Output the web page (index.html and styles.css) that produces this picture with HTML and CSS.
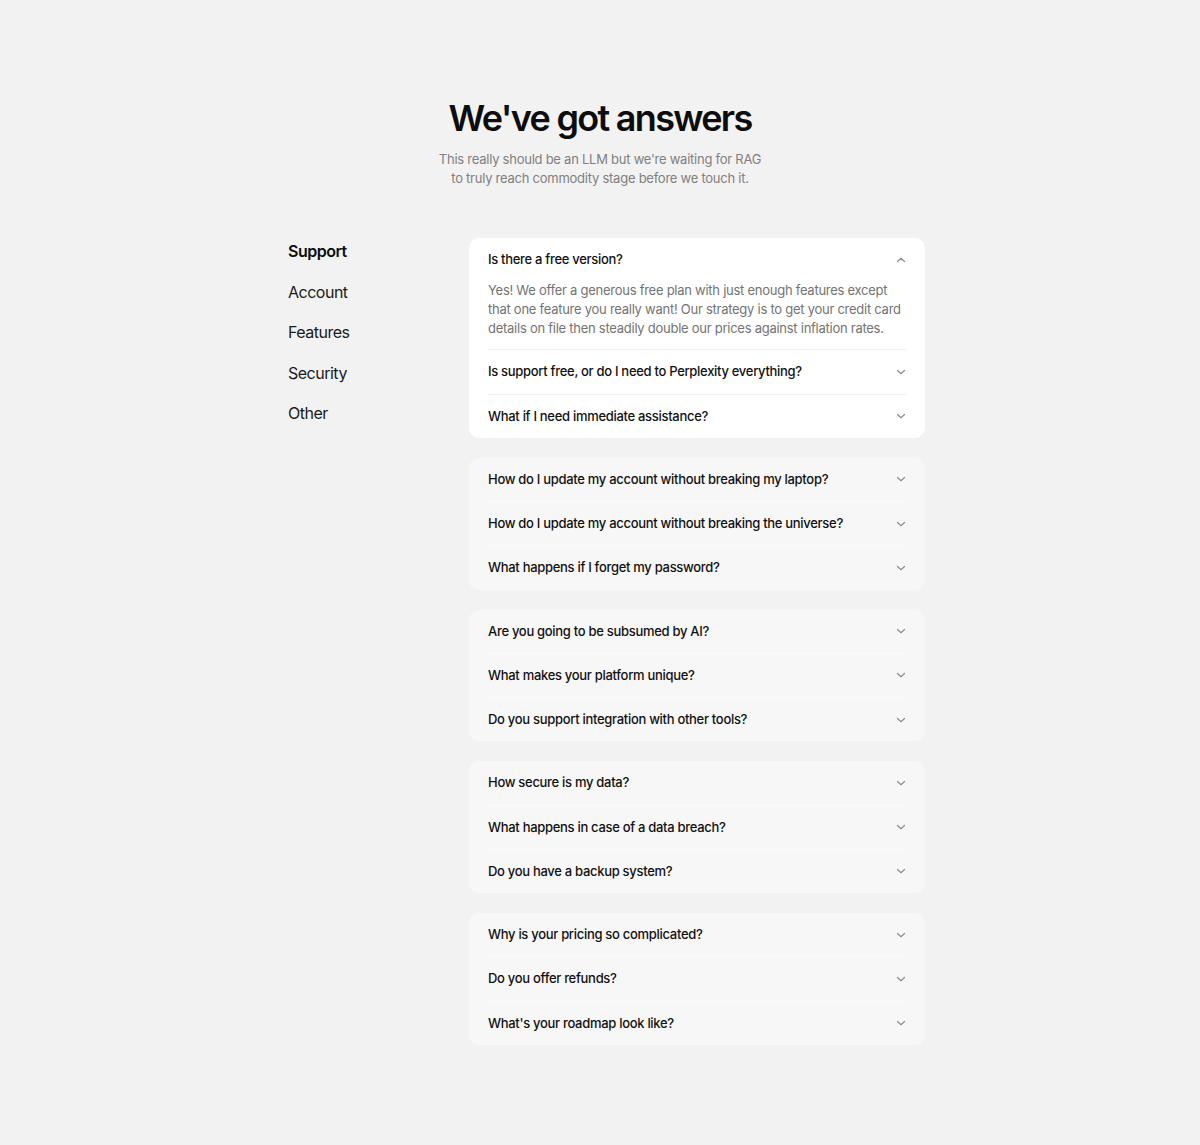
FILE: index.html
```html
<!DOCTYPE html>
<html lang="en">
<head>
    <meta charset="UTF-8">
    <meta name="viewport" content="width=device-width, initial-scale=1.0">
    <title>FAQ</title>
    <link rel="stylesheet" href="styles.css">
</head>
<body>
    <main id="faq">
        <header class="faq-header">
            <h1>We've got answers</h1>
            <p>This really should be an LLM but we're waiting for RAG<br>to truly reach commodity stage before we touch it.</p>
        </header>

        <div class="faq-layout">
            <nav class="faq-nav">
                <a class="active">Support</a>
                <a>Account</a>
                <a>Features</a>
                <a>Security</a>
                <a>Other</a>
            </nav>

            <div class="faq-groups">
                <section class="faq-card open">
                    <div class="faq-item">
                        <div class="faq-question">
                            <span>Is there a free version?</span>
                            <svg class="chevron" viewBox="0 0 10 10"><polyline points="1.5,6.5 5,3.3 8.5,6.5"/></svg>
                        </div>
                        <div class="faq-answer">Yes! We offer a generous free plan with just enough features except that one feature you really want! Our strategy is to get your credit card details on file then steadily double our prices against inflation rates.</div>
                    </div>
                    <div class="faq-item">
                        <div class="faq-question">
                            <span>Is support free, or do I need to Perplexity everything?</span>
                            <svg class="chevron" viewBox="0 0 10 10"><polyline points="1.5,3.5 5,6.7 8.5,3.5"/></svg>
                        </div>
                    </div>
                    <div class="faq-item">
                        <div class="faq-question">
                            <span>What if I need immediate assistance?</span>
                            <svg class="chevron" viewBox="0 0 10 10"><polyline points="1.5,3.5 5,6.7 8.5,3.5"/></svg>
                        </div>
                    </div>
                </section>

                <section class="faq-card">
                    <div class="faq-item">
                        <div class="faq-question">
                            <span>How do I update my account without breaking my laptop?</span>
                            <svg class="chevron" viewBox="0 0 10 10"><polyline points="1.5,3.5 5,6.7 8.5,3.5"/></svg>
                        </div>
                    </div>
                    <div class="faq-item">
                        <div class="faq-question">
                            <span>How do I update my account without breaking the universe?</span>
                            <svg class="chevron" viewBox="0 0 10 10"><polyline points="1.5,3.5 5,6.7 8.5,3.5"/></svg>
                        </div>
                    </div>
                    <div class="faq-item">
                        <div class="faq-question">
                            <span>What happens if I forget my password?</span>
                            <svg class="chevron" viewBox="0 0 10 10"><polyline points="1.5,3.5 5,6.7 8.5,3.5"/></svg>
                        </div>
                    </div>
                </section>

                <section class="faq-card">
                    <div class="faq-item">
                        <div class="faq-question">
                            <span>Are you going to be subsumed by AI?</span>
                            <svg class="chevron" viewBox="0 0 10 10"><polyline points="1.5,3.5 5,6.7 8.5,3.5"/></svg>
                        </div>
                    </div>
                    <div class="faq-item">
                        <div class="faq-question">
                            <span>What makes your platform unique?</span>
                            <svg class="chevron" viewBox="0 0 10 10"><polyline points="1.5,3.5 5,6.7 8.5,3.5"/></svg>
                        </div>
                    </div>
                    <div class="faq-item">
                        <div class="faq-question">
                            <span>Do you support integration with other tools?</span>
                            <svg class="chevron" viewBox="0 0 10 10"><polyline points="1.5,3.5 5,6.7 8.5,3.5"/></svg>
                        </div>
                    </div>
                </section>

                <section class="faq-card">
                    <div class="faq-item">
                        <div class="faq-question">
                            <span>How secure is my data?</span>
                            <svg class="chevron" viewBox="0 0 10 10"><polyline points="1.5,3.5 5,6.7 8.5,3.5"/></svg>
                        </div>
                    </div>
                    <div class="faq-item">
                        <div class="faq-question">
                            <span>What happens in case of a data breach?</span>
                            <svg class="chevron" viewBox="0 0 10 10"><polyline points="1.5,3.5 5,6.7 8.5,3.5"/></svg>
                        </div>
                    </div>
                    <div class="faq-item">
                        <div class="faq-question">
                            <span>Do you have a backup system?</span>
                            <svg class="chevron" viewBox="0 0 10 10"><polyline points="1.5,3.5 5,6.7 8.5,3.5"/></svg>
                        </div>
                    </div>
                </section>

                <section class="faq-card">
                    <div class="faq-item">
                        <div class="faq-question">
                            <span>Why is your pricing so complicated?</span>
                            <svg class="chevron" viewBox="0 0 10 10"><polyline points="1.5,3.5 5,6.7 8.5,3.5"/></svg>
                        </div>
                    </div>
                    <div class="faq-item">
                        <div class="faq-question">
                            <span>Do you offer refunds?</span>
                            <svg class="chevron" viewBox="0 0 10 10"><polyline points="1.5,3.5 5,6.7 8.5,3.5"/></svg>
                        </div>
                    </div>
                    <div class="faq-item">
                        <div class="faq-question">
                            <span>What's your roadmap look like?</span>
                            <svg class="chevron" viewBox="0 0 10 10"><polyline points="1.5,3.5 5,6.7 8.5,3.5"/></svg>
                        </div>
                    </div>
                </section>
            </div>
        </div>
    </main>
</body>
</html>
```

FILE: styles.css
```css
body {
    font-family: Inter, "Noto Sans", Arial, sans-serif;
    background-color: #f2f2f2;
    color: #111111;
    margin: 0;
    padding: 0;
}

#faq {
    padding: 94px 0 100px;
}

.faq-header {
    text-align: center;
}

.faq-header h1 {
    margin: 0;
    font-size: 36px;
    line-height: 48px;
    font-weight: 600;
    letter-spacing: -1.7px;
    color: #0d0d0d;
}

.faq-header p {
    margin: 8px 0 0;
    font-size: 13px;
    line-height: 19px;
    letter-spacing: -0.25px;
    color: #808080;
}

.faq-layout {
    width: 637px;
    margin: 50px auto 0;
    padding-left: 13px;
    display: grid;
    grid-template-columns: 181px 456px;
}

.faq-nav {
    display: flex;
    flex-direction: column;
    gap: 16.6px;
    padding-top: 1px;
}

.faq-nav a {
    font-size: 16px;
    line-height: 24px;
    letter-spacing: -0.5px;
    color: #1a1a1a;
    cursor: pointer;
}

.faq-nav a.active {
    font-weight: 600;
    color: #0d0d0d;
}

.faq-groups {
    display: flex;
    flex-direction: column;
    gap: 20px;
}

.faq-card {
    background-color: #f7f7f7;
    border-radius: 10px;
    padding: 0 19px;
}

.faq-card.open {
    background-color: #ffffff;
}

.faq-item + .faq-item {
    border-top: 1px solid #fbfbfb;
}

.faq-card.open .faq-item + .faq-item {
    border-top: 1px solid #f0f0f0;
}

.faq-question {
    display: flex;
    justify-content: space-between;
    align-items: center;
    padding: 13px 0;
    font-size: 13px;
    line-height: 17.25px;
    letter-spacing: -0.3px;
    font-weight: 500;
    color: #111111;
    cursor: pointer;
}

.chevron {
    width: 10px;
    height: 10px;
    flex-shrink: 0;
}

.chevron polyline {
    fill: none;
    stroke: #8c8c8c;
    stroke-width: 1.2;
    stroke-linecap: round;
    stroke-linejoin: round;
}

.faq-answer {
    padding-bottom: 11px;
    font-size: 13px;
    line-height: 19px;
    letter-spacing: -0.26px;
    color: #737373;
}
```
